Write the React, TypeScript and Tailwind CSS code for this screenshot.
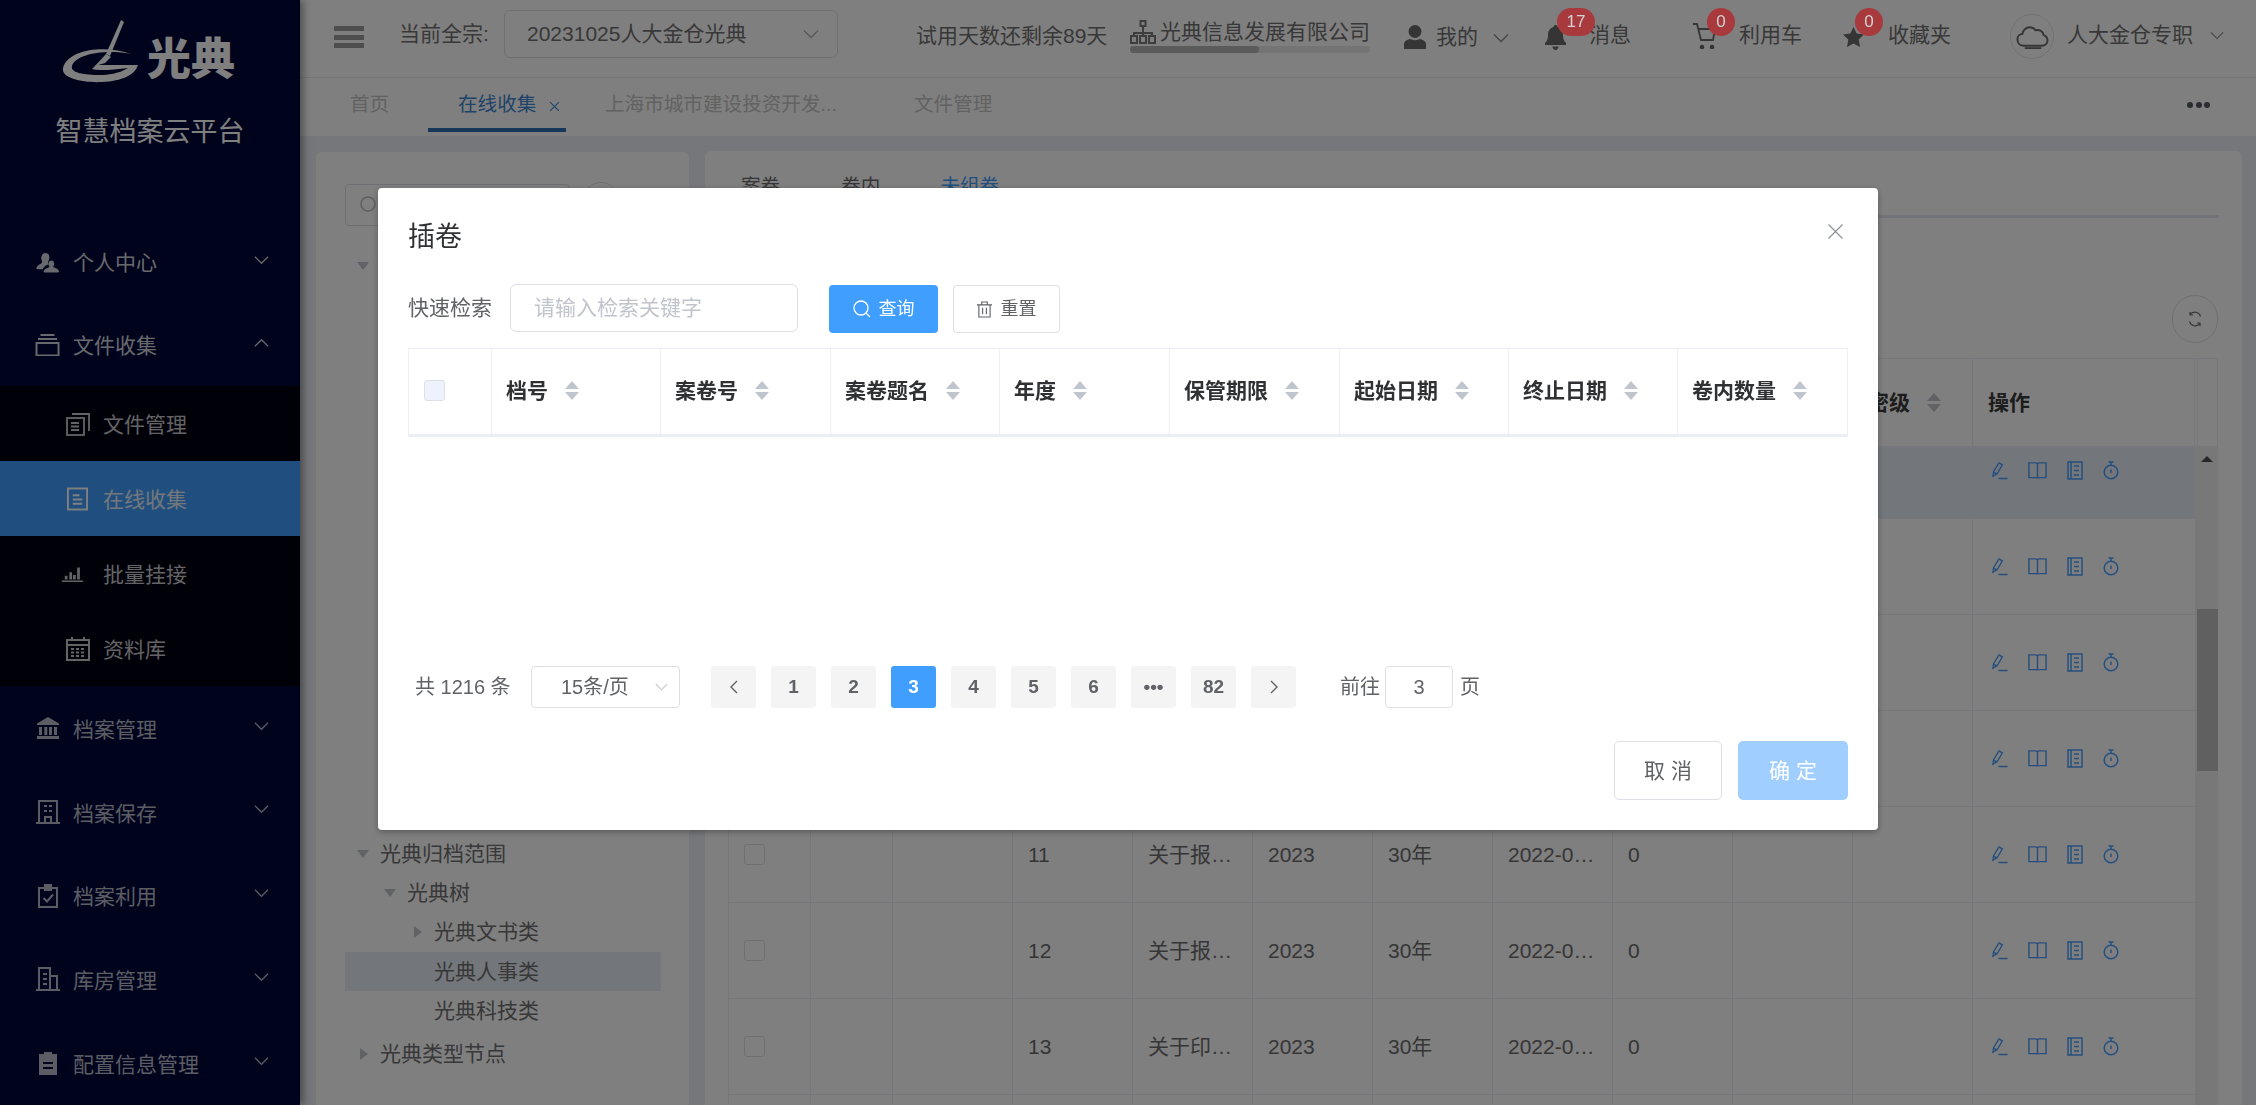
import React from "react";

type IC = { className?: string };
const Chevron = ({ className = "" }: IC) => (
  <svg viewBox="0 0 16 10" className={className} fill="none" stroke="currentColor" strokeWidth="1.3"><path d="M1 1.5 8 8.5 15 1.5" /></svg>
);
const Up = ({ className = "" }: IC) => (
  <svg viewBox="0 0 16 10" className={className} fill="none" stroke="currentColor" strokeWidth="1.3"><path d="M1 8.5 8 1.5 15 8.5" /></svg>
);
const PersonsIcon = ({ className = "" }: IC) => (
  <svg viewBox="0 0 25 22" className={className} fill="currentColor"><path d="M10 1c3 0 4.500 2 4.500 4.500 0 2.500-1 4-1.500 5l.5 2.500c-2 .5-5 2-6 5H2c-1 0-1.500-.5-1-1.500.5-2 2.500-3.500 5-4.500l1-2c-.5-1-1.500-2.500-1-4.500C6.500 3 8 1 10 1Z" /><path d="M16.500 9c2 0 3 1.500 3 3 0 1.500-.5 2.500-1 3l.5 1c2.500.8 5 2 5.500 4 .2.800-.3 1.500-1 1.500H9.500c-.8 0-1.300-.6-1-1.500.7-2 3-3.200 5.500-4l.5-1c-.7-.6-1.200-1.700-1-3.200.2-1.500 1.500-2.800 3-2.800Z" /></svg>
);
const BoxIcon = ({ className = "" }: IC) => (
  <svg viewBox="0 0 24 22" className={className} fill="none" stroke="currentColor" strokeWidth="2"><path d="M5 1h14M2.500 5h19" /><rect x="1" y="9" width="22" height="12.500" /></svg>
);
const DocCopyIcon = ({ className = "" }: IC) => (
  <svg viewBox="0 0 24 24" className={className} fill="none" stroke="currentColor" strokeWidth="1.800"><rect x="1" y="6" width="17" height="17" /><path d="M6 2h17v17M5 11h8M5 14.500h8M5 18h8" /></svg>
);
const DocIcon = ({ className = "" }: IC) => (
  <svg viewBox="0 0 22 24" className={className} fill="none" stroke="currentColor" strokeWidth="2"><rect x="1" y="1" width="20" height="22" /><path d="M6 8h7M6 12.500h10M6 17h10" /></svg>
);
const BarsIcon = ({ className = "" }: IC) => (
  <svg viewBox="0 0 24 18" className={className} fill="currentColor"><path d="M0 16h23v1.600H0zM3 11h3v4H3zM8 7h3v8H8zM12 10h3v5h-3zM16.500 2h3v13h-3z" /></svg>
);
const CalIcon = ({ className = "" }: IC) => (
  <svg viewBox="0 0 24 24" className={className} fill="none" stroke="currentColor" strokeWidth="2"><rect x="1" y="3" width="22" height="20" /><path d="M1 8h22M6 0v4M18 0v4" /><path d="M5 12h14M5 15.500h14M5 19h14" strokeDasharray="3 2" /></svg>
);
const BankIcon = ({ className = "" }: IC) => (
  <svg viewBox="0 0 24 22" className={className} fill="currentColor"><path d="M12 0 23 6.500v1.500H1V6.500ZM3 10h3v8H3zM8.300 10h3v8h-3zM13 10h3v8h-3zM18 10h3v8h-3zM1 19h22v3H1z" /></svg>
);
const BuildIcon = ({ className = "" }: IC) => (
  <svg viewBox="0 0 24 24" className={className} fill="none" stroke="currentColor" strokeWidth="2"><path d="M0 23h24M3 23V1h18v22M8 6h3M13 6h3M8 11h3M13 11h3M9 23v-6h6v6" /></svg>
);
const ClipCheckIcon = ({ className = "" }: IC) => (
  <svg viewBox="0 0 20 24" className={className} fill="none" stroke="currentColor" strokeWidth="2"><path d="M6 4H1v19h18V4h-5" /><rect x="7" y="1" width="6" height="5" fill="currentColor" /><path d="m5.500 14 3.500 3.500 6-7" /></svg>
);
const StoreIcon = ({ className = "" }: IC) => (
  <svg viewBox="0 0 24 24" className={className} fill="none" stroke="currentColor" strokeWidth="2"><path d="M0 23h24M3 23V1h11v22M14 9h7v14M7 7h4M7 12h4M7 17h4" /></svg>
);
const ClipFillIcon = ({ className = "" }: IC) => (
  <svg viewBox="0 0 20 24" className={className} fill="currentColor"><path d="M1 3h5V1h8v2h5v21H1Zm4 8v2h10v-2Zm0 5v2h10v-2Z" fillRule="evenodd" /></svg>
);
const HamburgerIcon = () => (
  <div className="flex h-[22px] w-[30px] flex-col justify-between">
    <div className="h-[5px] bg-[#9c9c9c]" />
    <div className="h-[5px] bg-[#9c9c9c]" />
    <div className="h-[5px] bg-[#9c9c9c]" />
  </div>
);
const PencilIcon = () => (
  <svg viewBox="0 0 18 19" className="h-[19px] w-[17px]" fill="none" stroke="currentColor" strokeWidth="1.500"><path d="M2 15.500 2.800 10.500 8.500 1.500 12 3.500 6.500 13ZM2.500 11l3.500 2M8 18h9.500" /></svg>
);
const BookIcon = () => (
  <svg viewBox="0 0 20 19" className="h-[19px] w-[19px]" fill="none" stroke="currentColor" strokeWidth="1.500"><path d="M1 1.500h7c1 0 2 .5 2 1.500v15c0-.5-1-1-2-1H1ZM19 1.500h-7c-1 0-2 .5-2 1.500v15c0-.5 1-1 2-1h7Z" /></svg>
);
const ListIcon = () => (
  <svg viewBox="0 0 16 19" className="h-[19px] w-[16px]" fill="none" stroke="currentColor" strokeWidth="1.500"><rect x="1" y="1" width="14" height="17" /><path d="M4 1v17M7 5h5M7 9.500h5M7 14h5" /></svg>
);
const TimerIcon = () => (
  <svg viewBox="0 0 16 19" className="h-[19px] w-[16px]" fill="none" stroke="currentColor" strokeWidth="1.500"><circle cx="8" cy="11" r="6.800" /><path d="M5.500 1h5M8 1v3M8 8.500v3.500" /></svg>
);
const Caret = () => (
  <div className="ml-[17px] flex flex-col gap-[3px]">
    <svg viewBox="0 0 14 8" className="h-[8px] w-[14px]" fill="#c0c4cc"><path d="M7 0 14 8H0Z" /></svg>
    <svg viewBox="0 0 14 8" className="h-[8px] w-[14px]" fill="#c0c4cc"><path d="M0 0h14L7 8Z" /></svg>
  </div>
);
const Tri = ({ down }: { down?: boolean }) =>
  down ? (
    <svg viewBox="0 0 12 8" className="ml-[1px] h-[8px] w-[12px]" fill="#c0c4cc"><path d="M0 0h12L6 8Z" /></svg>
  ) : (
    <svg viewBox="0 0 8 12" className="ml-[4px] h-[12px] w-[8px]" fill="#c0c4cc"><path d="M0 0 8 6 0 12Z" /></svg>
  );
const Badge = ({ n, className }: { n: string; className: string }) => (
  <div className={`absolute z-[15] flex h-[28px] items-center justify-center rounded-full bg-[#a83a3e] text-[17px] text-[#d2d2d2] ${className}`}>{n}</div>
);

const menuBottom = [
  { t: "档案管理", I: BankIcon },
  { t: "档案保存", I: BuildIcon },
  { t: "档案利用", I: ClipCheckIcon },
  { t: "库房管理", I: StoreIcon },
  { t: "配置信息管理", I: ClipFillIcon },
];
const subMenu = [
  { t: "文件管理", I: DocCopyIcon, c: "h-[24px] w-[24px]", p: "pr-[13px]" },
  { t: "在线收集", I: DocIcon, c: "h-[24px] w-[21px]", p: "pr-[15px]", on: true },
  { t: "批量挂接", I: BarsIcon, c: "h-[18px] w-[22px]", p: "pr-[19px]" },
  { t: "资料库", I: CalIcon, c: "h-[24px] w-[24px]", p: "pr-[13px]" },
];

function Sidebar() {
  return (
    <aside className="relative z-[1] flex h-full w-[300px] shrink-0 flex-col bg-[#000639] text-white shadow-[3px_0_8px_rgba(0,0,0,0.4)]">
      <div className="flex h-[90px] pl-[60px]">
        <svg viewBox="60 0 84 90" className="h-[90px] w-[84px]" fill="#ffffff">
          <path d="M121 20 124 22 110 56 106 54Z" />
          <path d="M106 54 111 57 105 63 95 66Z" />
          <path d="M131 54C108 45 68 48 63 68 61 79 85 83 102 82 122 81 135 75 138 65L96 65 92 69C99 71 112 70 128 68 118 74 108 75 100 75 85 75 70 73 72 66 76 54 105 49 131 54Z" />
        </svg>
        <div className="ml-[3px] mt-[37px] text-[44px] font-black leading-[45px]">光典</div>
      </div>
      <div className="mt-[22px] text-center text-[27px] leading-[40px]">智慧档案云平台</div>
      <div className="mt-[69px] flex h-[84px] items-center pl-[35px] pr-[31px] text-[#d0d2d8]">
        <PersonsIcon className="h-[21px] w-[25px]" />
        <span className="ml-[13px] flex-1 text-[21px]">个人中心</span>
        <Chevron className="mb-[5px] h-[10px] w-[15px]" />
      </div>
      <div className="flex h-[82.500px] items-center pl-[35px] pr-[31px] text-[#d0d2d8]">
        <BoxIcon className="h-[22px] w-[25px]" />
        <span className="ml-[13px] flex-1 text-[21px]">文件收集</span>
        <Up className="mb-[4px] h-[10px] w-[15px]" />
      </div>
      <div className="bg-[#000010]">
        {subMenu.map((s) => (
          <div key={s.t} className={`flex h-[75px] items-center ${s.on ? "bg-[#409eff] text-[#ffffff]" : "text-[#c8c8cc]"}`}>
            <div className={`flex w-[103px] justify-end ${s.p}`}>
              <s.I className={s.c} />
            </div>
            <span className={`pt-[3px] text-[21px] ${s.on ? "text-[#e8eef4]" : ""}`}>{s.t}</span>
          </div>
        ))}
      </div>
      {menuBottom.map((m) => (
        <div key={m.t} className="flex h-[84.400px] items-center pl-[35px] pr-[31px] text-[#b8bac8]">
          <div className="flex h-[24px] w-[25px] items-center justify-center">
            <m.I className="h-[24px] w-[24px]" />
          </div>
          <span className="ml-[13px] flex-1 pt-[3px] text-[21px]">{m.t}</span>
          <Chevron className="mb-[5px] h-[10px] w-[15px]" />
        </div>
      ))}
    </aside>
  );
}

function TopBar() {
  return (
    <header className="flex h-[78px] shrink-0 items-start border-b border-[#ececec] bg-white pl-[34px] text-[21px] leading-[28px] text-[#707070]">
      <div className="mt-[26px]"><HamburgerIcon /></div>
      <div className="ml-[35px] mt-[20px] w-[105px] shrink-0 whitespace-nowrap">当前全宗:</div>
      <div className="mt-[10px] flex h-[48px] w-[334px] shrink-0 items-center justify-between rounded-[6px] border border-[#dcdfe6] pl-[22px] pr-[18px]">
        <span className="text-[21px]">20231025人大金仓光典</span>
        <Chevron className="h-[10px] w-[16px] text-[#b0b0b0]" />
      </div>
      <div className="ml-[78px] mt-[22px] w-[214px] shrink-0 whitespace-nowrap">试用天数还剩余89天</div>
      <div className="mt-[19px] w-[242px] shrink-0">
        <div className="flex h-[26px] items-center">
          <svg viewBox="0 0 26 24" className="h-[24px] w-[26px] shrink-0" fill="none" stroke="#7a7a7a" strokeWidth="2"><rect x="10.500" y="1" width="5" height="5" /><path d="M13 6v7M4 15v-2h18v2M13 13v2" /><rect x="1" y="16" width="6" height="7" /><rect x="10" y="16" width="6" height="7" /><rect x="19" y="16" width="6" height="7" /></svg>
          <span className="ml-[4px] whitespace-nowrap">光典信息发展有限公司</span>
        </div>
        <div className="mt-[1px] h-[7px] w-[240px] rounded-full bg-[#e8e8e8]">
          <div className="h-[7px] w-[129px] rounded-full bg-[#b6b6b6]" />
        </div>
      </div>
      <svg viewBox="0 0 22 24" className="ml-[32px] mt-[25px] h-[24px] w-[22px] shrink-0" fill="#6a6a6a"><ellipse cx="11" cy="6.500" rx="6.500" ry="6.500" /><path d="M0 24v-5c0-2.500 3-4.500 6-5 3 1.500 7 1.500 10 0 3 .5 6 2.500 6 5v5Z" /></svg>
      <div className="ml-[10px] mt-[23px] w-[42px] shrink-0 whitespace-nowrap">我的</div>
      <Chevron className="ml-[15px] mt-[33px] h-[10px] w-[16px] shrink-0 text-[#8c8c8c]" />
      <div className="relative ml-[34px] mt-[25px] h-[25px] w-[25px] shrink-0">
        <svg viewBox="0 0 25 25" className="h-[25px] w-[25px]" fill="#6a6a6a"><path d="M12.500 0c1.500 0 2 1 2 2 3.500 1 5.500 4 5.500 8 0 4 1 6 3 8v2H2v-2c2-2 3-4 3-8 0-4 2-7 5.500-8 0-1 .5-2 2-2ZM9.500 21.500h6c0 2-1.500 3.500-3 3.500s-3-1.500-3-3.500Z" /></svg>
        <Badge n="17" className="left-[14px] top-[-17px] w-[38px]" />
      </div>
      <div className="ml-[21px] mt-[21px] w-[42px] shrink-0 whitespace-nowrap">消息</div>
      <div className="relative ml-[62px] mt-[23px] h-[26px] w-[24px] shrink-0">
        <svg viewBox="0 0 24 26" className="h-[26px] w-[24px]" fill="none" stroke="#6a6a6a" strokeWidth="1.800"><path d="M0 1h4l4 16h12l2-11H5" /><circle cx="9" cy="24" r="1.400" fill="#6a6a6a" /><circle cx="19" cy="24" r="1.400" fill="#6a6a6a" /></svg>
        <Badge n="0" className="left-[14px] top-[-15px] w-[28px]" />
      </div>
      <div className="ml-[22px] mt-[21px] w-[62px] shrink-0 whitespace-nowrap">利用车</div>
      <div className="relative ml-[42px] mt-[27px] h-[20px] w-[21px] shrink-0">
        <svg viewBox="0 0 21 20" className="h-[20px] w-[21px]" fill="#6a6a6a"><path d="m10.500 0 3.200 6.600 7.300 1-5.300 5 1.300 7.400-6.500-3.500L4 20l1.300-7.400L0 7.600l7.300-1Z" /></svg>
        <Badge n="0" className="left-[12px] top-[-19px] w-[28px]" />
      </div>
      <div className="ml-[24px] mt-[21px] w-[63px] shrink-0 whitespace-nowrap">收藏夹</div>
      <div className="ml-[59px] mt-[14px] flex h-[45px] w-[44px] shrink-0 items-center justify-center rounded-full border border-[#e4e4e4]">
        <svg viewBox="0 0 34 24" className="h-[24px] w-[33px]" fill="none" stroke="#6a6a6a" strokeWidth="2"><path d="M8 21c-4 0-6.500-3-6.500-6.500C1.500 11 4 9 6.500 9 7 5 10.500 2 14 2c3 0 5 1.500 6 3 4-1 8 1 8.500 5 2.500 1 4 3 4 5.500 0 3-2.500 5.500-5.500 5.500Z" /><path d="M9 23.500h17" /></svg>
      </div>
      <div className="ml-[13px] mt-[21px] w-[126px] shrink-0 whitespace-nowrap">人大金仓专职</div>
      <Chevron className="ml-[17px] mt-[31px] h-[9px] w-[14px] shrink-0 text-[#8c8c8c]" />
    </header>
  );
}

function TabBar() {
  return (
    <div className="flex h-[58px] shrink-0 items-stretch bg-white text-[19.600px] text-[#c4c4c4]">
      <div className="ml-[50px] flex w-[39px] items-center pb-[4px] whitespace-nowrap">首页</div>
      <div className="mb-[4px] ml-[39px] flex w-[138px] items-center border-b-[4px] border-[#2d6fb4] pl-[30px] pt-[4px] text-[#3f86d2]">
        <span className="whitespace-nowrap">在线收集</span>
        <svg viewBox="0 0 10 10" className="ml-[13px] mt-[3px] h-[11px] w-[11px] shrink-0" fill="none" stroke="currentColor" strokeWidth="1"><path d="m1 1 8 8M9 1l-8 8" /></svg>
      </div>
      <div className="ml-[39px] flex w-[233px] items-center pb-[4px] whitespace-nowrap">上海市城市建设投资开发...</div>
      <div className="ml-[76px] flex items-center pb-[4px]">文件管理</div>
      <div className="ml-auto flex items-center gap-[2.500px] pb-[4px] pr-[46px]">
        <div className="h-[6px] w-[6px] rounded-full bg-[#505a60]" />
        <div className="h-[6px] w-[6px] rounded-full bg-[#505a60]" />
        <div className="h-[6px] w-[6px] rounded-full bg-[#505a60]" />
      </div>
    </div>
  );
}

function TreeRow({ label, indent, tri, on, className = "" }: { label: string; indent: number; tri?: "down" | "right"; on?: boolean; className?: string }) {
  return (
    <div className={`flex h-[39.200px] items-center ${on ? "bg-[#e6edf7]" : ""} ${className}`} style={{ paddingLeft: indent }}>
      <div className="flex w-[35px] items-center justify-start pl-[11px]">
        {tri === "down" && <Tri down />}
        {tri === "right" && <Tri />}
      </div>
      <span className="text-[21px] text-[#707070]">{label}</span>
    </div>
  );
}

function LeftPanel() {
  return (
    <section className="mt-[1px] h-full w-[373px] shrink-0 rounded-t-[6px] bg-white">
      <div className="ml-[29px] mt-[32px] flex items-start">
        <div className="flex h-[42px] w-[225px] items-center rounded-[4px] border border-[#dcdfe6] pl-[14px]">
          <svg viewBox="0 0 18 18" className="h-[18px] w-[18px]" fill="none" stroke="#b8b8b8" strokeWidth="1.400"><circle cx="8" cy="8" r="7" /></svg>
        </div>
        <div className="ml-[12px] mt-[-2px] h-[44px] w-[38px] rounded-full border border-[#dcdfe6]" />
      </div>
      <div className="ml-[29px] mr-[28px] mt-[20px]">
        <TreeRow label="" indent={0} tri="down" />
        <div className="h-[549px]" />
        <TreeRow label="光典归档范围" indent={0} tri="down" />
        <TreeRow label="光典树" indent={27} tri="down" />
        <TreeRow label="光典文书类" indent={54} tri="right" />
        <TreeRow label="光典人事类" indent={54} on />
        <TreeRow label="光典科技类" indent={54} />
        <TreeRow label="光典类型节点" indent={0} tri="right" className="mt-[4px]" />
      </div>
    </section>
  );
}

const colW = ["w-[82px]", "w-[82px]", "w-[120px]", "w-[120px]", "w-[120px]", "w-[120px]", "w-[120px]", "w-[120px]", "w-[120px]", "w-[120px]", "w-[120px]", "w-[222px]"];

const rows = [
  { h: "h-[72px] pb-[24px] bg-[#e6edf7]" },
  { h: "h-[96px]" },
  { h: "h-[96px]" },
  { h: "h-[96px]" },
  { h: "h-[96px]", no: "11", t: "关于报…" },
  { h: "h-[96px]", no: "12", t: "关于报…" },
  { h: "h-[96px]", no: "13", t: "关于印…" },
  { h: "h-[96px]" },
];

function BackTable() {
  return (
    <div className="ml-[23px] mt-[15px] w-[1490px] border border-b-0 border-[#ebeef5]">
      <div className="flex h-[87px] text-[21px] font-bold text-[#3a3a3a]">
        {colW.map((w, i) => (
          <div key={i} className={`${w} flex items-center border-r border-[#ebeef5] pl-[15px]`}>
            {i === 10 && (<><span>密级</span><Caret /></>)}
            {i === 11 && <span>操作</span>}
          </div>
        ))}
        <div className="w-[3px] border-r border-[#ebeef5]" />
        <div className="flex-1" />
      </div>
      <div className="flex">
        <div className="w-[1466px]">
          {rows.map((r, ri) => (
            <div key={ri} className={`flex border-t border-[#ebeef5] ${r.h}`}>
              {colW.map((w, i) => (
                <div key={i} className={`${w} flex items-center border-r border-[#ebeef5] text-[21px] text-[#6c6c6c] ${i === 11 ? "border-r-0 pl-[18px]" : "pl-[15px]"}`}>
                  {i === 0 && r.no && <div className="h-[21px] w-[21px] rounded-[3px] border border-[#dcdfe6]" />}
                  {r.no && i === 3 && <span>{r.no}</span>}
                  {r.no && i === 4 && <span className="whitespace-nowrap">{r.t}</span>}
                  {r.no && i === 5 && <span>2023</span>}
                  {r.no && i === 6 && <span>30年</span>}
                  {r.no && i === 7 && <span className="whitespace-nowrap">2022-0…</span>}
                  {r.no && i === 8 && <span>0</span>}
                  {i === 11 && (
                    <div className="flex items-center gap-[20px] text-[#4a9eff]">
                      <PencilIcon /><BookIcon /><ListIcon /><TimerIcon />
                    </div>
                  )}
                </div>
              ))}
            </div>
          ))}
        </div>
        <div className="w-[24px] bg-[#f1f1f1]">
          <svg viewBox="0 0 12 6" className="ml-[6px] mt-[10px] h-[6px] w-[12px]" fill="#505050"><path d="M6 0 12 6H0Z" /></svg>
          <div className="ml-[2px] mt-[147px] h-[162px] w-[21px] bg-[#c1c1c1]" />
        </div>
      </div>
    </div>
  );
}

function RightPanel() {
  return (
    <section className="ml-[16px] h-full w-[1537px] shrink-0 rounded-t-[6px] bg-white">
      <div className="ml-[20px] mr-[23px] mt-[14px] flex h-[53px] items-center border-b-[3px] border-[#e4e7ed] pb-[6px] text-[19.600px] text-[#6c6c6c]">
        <span className="ml-[16px]">案卷</span>
        <span className="ml-[61px]">卷内</span>
        <span className="ml-[60px] text-[#409eff]">未组卷</span>
      </div>
      <div className="mr-[24px] mt-[77px] flex justify-end">
        <div className="flex h-[48px] w-[46px] items-center justify-center rounded-full border border-[#dcdfe6]">
          <svg viewBox="0 0 16 16" className="h-[16px] w-[16px]" fill="none" stroke="#666" strokeWidth="1.100"><path d="M13.500 5.500A6 6 0 0 0 3 3.500M2.500 10.500A6 6 0 0 0 13 12.500M3 1v3h3M13 15v-3h-3" /></svg>
        </div>
      </div>
      <BackTable />
    </section>
  );
}

function Btn({ className, children }: { className: string; children: React.ReactNode }) {
  return <div className={`flex h-[42px] items-center justify-center rounded-[3px] text-[19px] font-bold ${className}`}>{children}</div>;
}

const modalCols = [
  ["w-[83px]", ""],
  ["w-[169px]", "档号"],
  ["w-[170px]", "案卷号"],
  ["w-[169px]", "案卷题名"],
  ["w-[170px]", "年度"],
  ["w-[170px]", "保管期限"],
  ["w-[169px]", "起始日期"],
  ["w-[169px]", "终止日期"],
  ["w-[169px]", "卷内数量"],
];

function Modal() {
  return (
    <div className="fixed left-[378px] top-[188px] z-20 h-[642px] w-[1500px] rounded-[4px] bg-white text-[#606266] shadow-[0_2px_6px_rgba(0,0,0,0.3)]">
      <div className="flex h-[96px] items-center justify-between pl-[30px] pr-[35px]">
        <span className="pt-[2px] text-[27px] text-[#303133]">插卷</span>
        <svg viewBox="0 0 15 15" className="mb-[10px] h-[15px] w-[15px]" fill="none" stroke="#8d9096" strokeWidth="1.200"><path d="m.5.5 14 14M14.500.5l-14 14" /></svg>
      </div>
      <div className="flex h-[48px] items-center pl-[30px]">
        <span className="w-[102px] shrink-0 text-[21px]">快速检索</span>
        <div className="flex h-[48px] w-[288px] items-center rounded-[6px] border border-[#dcdfe6] pl-[23px] text-[21px] text-[#c0c4cc]">请输入检索关键字</div>
        <div className="ml-[31px] mt-[2px] flex h-[48px] w-[109px] items-center justify-center rounded-[4px] bg-[#409eff] text-[18px] text-white">
          <svg viewBox="0 0 18 18" className="mr-[8px] h-[18px] w-[18px]" fill="none" stroke="currentColor" strokeWidth="1.300"><circle cx="8" cy="8" r="7" /><path d="m13 13 4 4" /></svg>
          查询
        </div>
        <div className="ml-[15px] mt-[2px] flex h-[48px] w-[107px] items-center justify-center rounded-[4px] border border-[#dcdfe6] text-[18px]">
          <svg viewBox="0 0 16 18" className="mr-[9px] h-[17px] w-[15px]" fill="none" stroke="currentColor" strokeWidth="1.200"><path d="M0 4h16M2 4v13h12V4M5 4V1h6v3M6 7v7M10 7v7" /></svg>
          重置
        </div>
      </div>
      <div className="ml-[30px] mt-[16px] flex h-[89px] w-[1440px] border border-b-[3px] border-[#ebeef5]">
        {modalCols.map(([w, t], i) => (
          <div key={i} className={`${w} flex shrink-0 items-center pb-[2px] ${i < 8 ? "border-r border-[#ebeef5]" : ""} ${i === 0 ? "pl-[15px]" : "pl-[14px]"}`}>
            {i === 0 ? (
              <div className="h-[21px] w-[21px] rounded-[3px] border border-[#dcdfe6] bg-[#edf2fc]" />
            ) : (
              <>
                <span className="whitespace-nowrap text-[21px] font-bold text-[#303133]">{t}</span>
                <Caret />
              </>
            )}
          </div>
        ))}
      </div>
      <div className="mt-[229px] flex h-[42px] items-center text-[20px]">
        <span className="ml-[37px] w-[116px] shrink-0 whitespace-nowrap">共 1216 条</span>
        <div className="flex h-[42px] w-[149px] shrink-0 items-center rounded-[4px] border border-[#dcdfe6] pl-[29px] pr-[11px]">
          <span className="flex-1 whitespace-nowrap">15条/页</span>
          <Chevron className="h-[8px] w-[13px] text-[#c0c4cc]" />
        </div>
        <div className="ml-[31px] flex gap-[15px]">
          <Btn className="w-[45px] bg-[#f4f4f5]">
            <svg viewBox="0 0 8 14" className="h-[14px] w-[8px]" fill="none" stroke="#606266" strokeWidth="1.400"><path d="M7 1 1 7l6 6" /></svg>
          </Btn>
          {["1", "2", "3", "4", "5", "6"].map((n) => (
            <Btn key={n} className={`w-[45px] ${n === "3" ? "bg-[#409eff] text-white" : "bg-[#f4f4f5]"}`}>{n}</Btn>
          ))}
          <Btn className="w-[45px] bg-[#f4f4f5]">•••</Btn>
          <Btn className="w-[45px] bg-[#f4f4f5]">82</Btn>
          <Btn className="w-[45px] bg-[#f4f4f5]">
            <svg viewBox="0 0 8 14" className="h-[14px] w-[8px]" fill="none" stroke="#606266" strokeWidth="1.400"><path d="m1 1 6 6-6 6" /></svg>
          </Btn>
        </div>
        <span className="ml-[44px] w-[45px] shrink-0">前往</span>
        <div className="flex h-[42px] w-[68px] shrink-0 items-center justify-center rounded-[4px] border border-[#dcdfe6]">3</div>
        <span className="ml-[7px]">页</span>
      </div>
      <div className="mr-[30px] mt-[33px] flex justify-end gap-[16px] text-[21px]">
        <div className="flex h-[59px] w-[108px] items-center justify-center rounded-[5px] border border-[#dcdfe6]">取 消</div>
        <div className="flex h-[59px] w-[110px] items-center justify-center rounded-[5px] bg-[#a0cfff] text-white">确 定</div>
      </div>
    </div>
  );
}

export default function App() {
  return (
    <div className="flex h-screen w-full overflow-hidden bg-[#eceef4] font-['Liberation_Sans','Noto_Sans_CJK_SC',sans-serif]">
      <Sidebar />
      <div className="flex h-full min-w-0 flex-1 flex-col">
        <TopBar />
        <TabBar />
        <main className="flex min-h-0 flex-1 overflow-hidden pl-[16px] pt-[15px]">
          <LeftPanel />
          <RightPanel />
        </main>
      </div>
      <div className="fixed inset-0 z-10 bg-black/50" />
      <Modal />
    </div>
  );
}
